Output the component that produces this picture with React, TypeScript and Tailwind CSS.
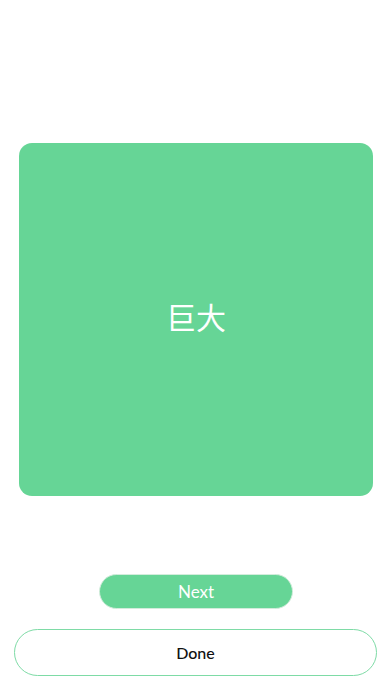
import React from "react";

export default function App() {
  return (
    <div
      className="w-[392px] h-[696px] bg-white flex flex-col"
      style={{ fontFamily: '"Lato", "Noto Sans CJK SC", sans-serif' }}
    >
      <div className="mt-[143px] ml-[19px] w-[354px] h-[353px] rounded-[13px] bg-[#66d596] flex items-center justify-center pb-[7px]">
        <span
          className="text-white text-[30px] leading-none"
          style={{ fontFamily: '"Noto Sans CJK SC", sans-serif' }}
        >
          巨大
        </span>
      </div>
      <button className="mt-[78px] mx-auto w-[194px] h-[35px] rounded-full bg-[#66d596] border border-[#d3ecdc] text-white text-[17px] flex items-center justify-center">
        Next
      </button>
      <button className="mt-[20px] ml-[14px] w-[363px] h-[47px] rounded-full bg-white border border-[#7edba6] text-[#111] text-[16px] font-medium flex items-center justify-center">
        Done
      </button>
    </div>
  );
}
